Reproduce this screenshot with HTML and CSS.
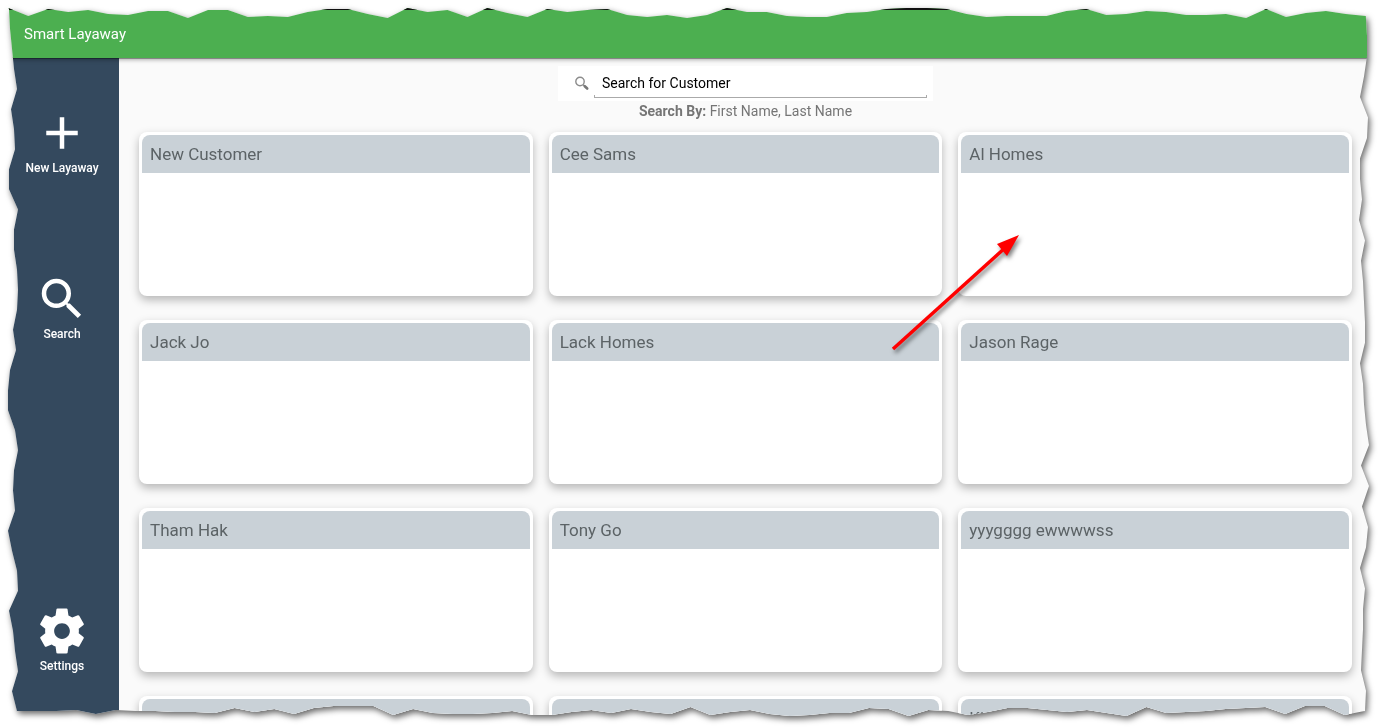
FILE: index.html
```html
<!DOCTYPE html>
<html lang="en">
<head>
  <meta charset="utf-8">
  <meta name="viewport" content="width=device-width, initial-scale=1">
  <title>Smart Layaway</title>
  <link rel="stylesheet" href="styles.css">
</head>
<body>
  <div class="sheet">
    <div class="app" id="app">
      <header class="app-bar"><h1 class="app-title">Smart Layaway</h1></header>
      <div class="app-body">
        <nav class="sidebar" aria-label="Main">
          <button class="nav-item" type="button">
            <svg class="nav-icon" viewBox="0 0 24 24" aria-hidden="true"><path d="M19 13h-6v6h-2v-6H5v-2h6V5h2v6h6z"/></svg>
            <span>New Layaway</span>
          </button>
          <button class="nav-item" type="button">
            <svg class="nav-icon" viewBox="0 0 24 24" aria-hidden="true"><path d="M15.5 14h-.79l-.28-.27A6.47 6.47 0 0 0 16 9.500 6.500 6.500 0 1 0 9.500 16c1.610 0 3.090-.59 4.230-1.570l.27.28v.79l5 4.990L20.490 19zm-6 0C7.010 14 5 11.990 5 9.500S7.010 5 9.500 5 14 7.010 14 9.500 11.990 14 9.500 14z"/></svg>
            <span>Search</span>
          </button>
          <button class="nav-item nav-item-last" type="button">
            <svg class="nav-icon" viewBox="0 0 24 24" aria-hidden="true"><path d="M19.430 12.980c.04-.32.07-.64.07-.98s-.03-.66-.07-.98l2.110-1.650c.19-.15.24-.42.12-.64l-2-3.460c-.12-.22-.39-.3-.61-.22l-2.490 1c-.52-.4-1.080-.73-1.690-.98l-.38-2.650A.488.488 0 0 0 14 2h-4c-.25 0-.46.18-.49.42l-.38 2.650c-.61.25-1.170.59-1.690.98l-2.490-1c-.23-.09-.49 0-.61.22l-2 3.460c-.13.22-.07.49.12.64l2.110 1.650c-.04.32-.07.65-.07.98s.03.66.07.98l-2.110 1.650c-.19.15-.24.42-.12.64l2 3.460c.12.22.39.3.61.22l2.490-1c.52.4 1.080.73 1.690.98l.38 2.650c.03.24.24.42.49.42h4c.25 0 .46-.18.49-.42l.38-2.650c.61-.25 1.170-.59 1.690-.98l2.490 1c.23.09.49 0 .61-.22l2-3.460c.12-.22.07-.49-.12-.64zM12 15.500c-1.930 0-3.500-1.570-3.500-3.500s1.570-3.500 3.500-3.500 3.500 1.570 3.500 3.500-1.570 3.500-3.500 3.500z"/></svg>
            <span>Settings</span>
          </button>
        </nav>
        <main class="content">
          <form class="search" role="search">
            <label class="search-label" for="customer" aria-label="Search for Customer">
              <svg class="search-icon" viewBox="0 0 16 16" aria-hidden="true"><circle cx="6" cy="5.500" r="4.200" fill="none" stroke="#8c8c8c" stroke-width="1.400"/><path d="M9.200 8.700l1.500 1.500" stroke="#888" stroke-width="1.400"/><path d="M10.800 10.200l2.400 2.300" stroke="#777" stroke-width="2.600" stroke-linecap="round"/></svg>
            </label>
            <input class="search-input" id="customer" type="text" placeholder="Search for Customer">
          </form>
          <p class="search-by"><b>Search By:</b> First Name, Last Name</p>
          <section class="cards" aria-label="Customers">
            <article class="card"><h2 class="card-title">New Customer</h2></article>
            <article class="card"><h2 class="card-title">Cee Sams</h2></article>
            <article class="card"><h2 class="card-title">Al Homes</h2></article>
            <article class="card"><h2 class="card-title">Jack Jo</h2></article>
            <article class="card"><h2 class="card-title">Lack Homes</h2></article>
            <article class="card"><h2 class="card-title">Jason Rage</h2></article>
            <article class="card"><h2 class="card-title">Tham Hak</h2></article>
            <article class="card"><h2 class="card-title">Tony Go</h2></article>
            <article class="card"><h2 class="card-title">yyygggg ewwwwss</h2></article>
            <article class="card"><h2 class="card-title">yyy W</h2></article>
            <article class="card"><h2 class="card-title">&nbsp;</h2></article>
            <article class="card"><h2 class="card-title">Kim</h2></article>
          </section>
          <svg class="arrow" viewBox="0 0 140 130" aria-hidden="true"><path d="M5 119L118 17" stroke="#f00" stroke-width="3.500"/><path d="M131 5L109 14L114 20L119 26z" fill="#f00"/></svg>
        </main>
      </div>
    </div>
  </div>
  <script src="edge.js"></script>
</body>
</html>
```
FILE: styles.css
```css
* { box-sizing: border-box; }

body {
  margin: 0;
  background: #fff;
  font-family: Roboto, "Liberation Sans", sans-serif;
}

h1, h2, p { margin: 0; font-weight: 400; }

.sheet {
  filter: drop-shadow(2px 3px 3px rgba(0, 0, 0, 0.6));
}

.app {
  display: flex;
  flex-direction: column;
  height: 100vh;
  overflow: hidden;
  padding-top: 8px;
  background: #fafafa;
}

.app-bar {
  position: relative;
  z-index: 1;
  flex: none;
  display: flex;
  align-items: center;
  height: 50px;
  padding-left: 24px;
  border-top: 2px solid #111;
  background: #4caf50;
  box-shadow: 0 1px 0 rgba(0, 0, 0, 0.3), 0 2px 4px rgba(0, 0, 0, 0.3);
}

.app-title { font-size: 15px; line-height: 20px; color: #fff; }

.app-body { display: flex; flex: 1; min-height: 0; }

.sidebar {
  flex: none;
  display: flex;
  flex-direction: column;
  align-items: center;
  gap: 96px;
  width: 119px;
  padding: 48px 0 54px 5px;
  background: #34495e;
}

.nav-item {
  display: flex;
  flex-direction: column;
  align-items: center;
  padding: 0;
  border: 0;
  background: none;
  color: #fff;
  font: 500 12px/16px Roboto, "Liberation Sans", sans-serif;
}

.nav-item-last { margin-top: auto; }

.nav-icon { width: 54px; height: 54px; fill: #fff; }

.content {
  position: relative;
  flex: 1;
  display: flex;
  flex-direction: column;
  align-items: center;
  padding: 8px 29px 0 20px;
}

.search {
  flex: none;
  display: flex;
  align-items: center;
  width: 375px;
  max-width: 100%;
  height: 35px;
  padding: 0 6px 0 16px;
  background: #fff;
}

.search-label { width: 20px; height: 16px; }

.search-icon { display: block; width: 16px; height: 16px; }

.search-input {
  flex: 1;
  min-width: 0;
  height: 28px;
  padding: 0 8px;
  border: 0;
  border-bottom: 1px solid #aaa;
  background:
    linear-gradient(#aaa, #aaa) left bottom / 1px 2px no-repeat,
    linear-gradient(#aaa, #aaa) right bottom / 1px 2px no-repeat;
  color: #000;
  font: 14px/20px Roboto, "Liberation Sans", sans-serif;
}

.search-input::placeholder { color: #000; opacity: 1; }

.search-by { font-size: 14px; line-height: 20px; color: #757575; }

.search-by b { font-weight: 700; }

.cards {
  display: grid;
  grid-template-columns: repeat(3, 1fr);
  gap: 24px 16px;
  align-self: stretch;
  margin-top: 11px;
}

.card {
  height: 164px;
  padding: 3px;
  border-radius: 8px;
  background: #fff;
  box-shadow: 0 4px 10px rgba(0, 0, 0, 0.28);
}

.card-title {
  padding: 9px 8px;
  border-radius: 8px 8px 0 0;
  background: #c9d1d7;
  font-size: 17px;
  line-height: 20px;
  color: #5c6366;
}

.arrow {
  position: absolute;
  left: 769px;
  top: 172px;
  width: 140px;
  height: 130px;
  filter: drop-shadow(2px 3px 2px rgba(0, 0, 0, 0.5));
}
```
FILE: edge.js
```js
// Torn-paper outline of the sheet. Each profile lists the inset from its own
// edge, sampled at even steps, so the outline stretches with the window.
const top_ = [8,16,9,12,10,14,15,11,11,18,10,10,17,16,17,12,9,9,14,18,8,12,10,17,8,13,17,9,12,10,9,15,17,15,18,15,8,12,12,16,17,17,13,12,9,8,8,9,14,17,16,16,16,11,9,15,14,11,12,15,15,14,18,9,17,13,11,14,16];
const right = [14,14,17,21,13,14,21,21,19,22,16,20,18,17,16,16,21,18,17,15,12,20,12,19,13,15,21,16,18,18,19,20,15,16];
const bottom = [17,17,17,18,14,18,17,17,16,16,15,20,16,19,14,20,22,22,22,13,19,15,14,14,15,17,13,13,16,18,15,19,16,14,21,13,16,18,14,12,13,15,15,20,19,12,18,17,13,16,20,20,18,16,18,15,12,21,15,16,17,19,20,21,14,22,22,13,17];
const left = [9,10,12,14,17,11,14,15,9,9,18,14,14,17,18,17,13,16,10,8,8,15,18,14,13,15,8,12,17,18,9,13,15,18,12,17];

const pct = (i, list, from, to) => (from + (to - from) * i / (list.length - 1)).toFixed(2) + "%";

const points = [
  ...top_.map((d, i) => `${pct(i, top_, 0.6, 98.9)} ${d}px`),
  ...right.map((d, i) => `calc(100% - ${d}px) ${pct(i, right, 4.9, 97.7)}`),
  ...bottom.map((d, i) => `${pct(i, bottom, 1.2, 98.8)} calc(100% - ${d}px)`).reverse(),
  ...left.map((d, i) => `${d}px ${pct(i, left, 1.2, 97.7)}`).reverse()
];

document.getElementById("app").style.clipPath = `polygon(${points.join(", ")})`;
```
